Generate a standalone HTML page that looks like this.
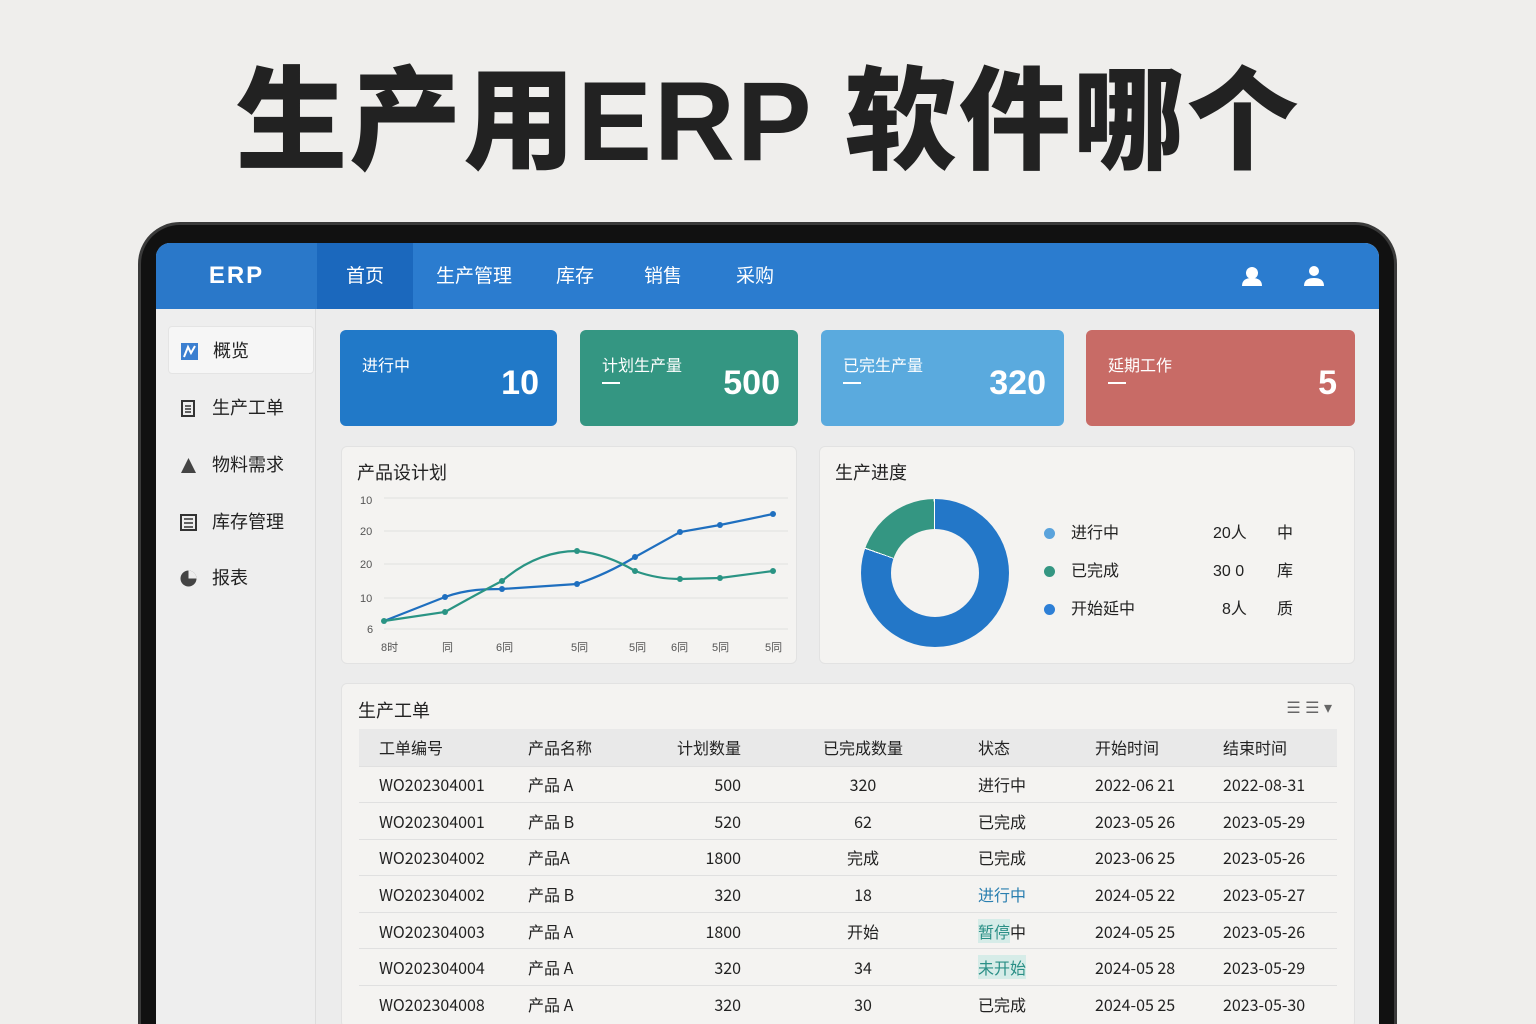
<!DOCTYPE html>
<html><head><meta charset="utf-8">
<style>
*{margin:0;padding:0;box-sizing:border-box}
html,body{width:1536px;height:1024px;overflow:hidden}
body{background:#efeeec;font-family:"Liberation Sans","Noto Sans CJK SC",sans-serif;color:#222}
.wrap{position:relative;width:1536px;height:1024px;overflow:hidden}
.title{position:absolute;left:0;width:1536px;top:52px;text-align:center;font-size:112px;font-weight:900;color:#222;letter-spacing:2px;line-height:140px}
.dev{position:absolute;left:138px;top:222px;width:1259px;height:802px;background:#111;border-radius:42px 42px 0 0;border:3px solid #3a3a3a;border-bottom:0}
.scr{position:absolute;left:156px;top:243px;width:1223px;height:781px;background:#ececec;border-radius:14px 14px 0 0;overflow:hidden}
.hdr{position:absolute;left:0;top:0;width:1223px;height:66px;background:#2b7ccf}
.logo{position:absolute;left:0;top:0;width:161px;height:66px;background:#2a78c9;color:#fff;font-size:24px;text-align:center;line-height:66px;font-weight:bold;letter-spacing:2px}
.tab{position:absolute;top:0;height:66px;line-height:68px;color:#fff;font-size:19px}
.act{background:#1b68bd;width:96px;text-align:center}
.side{position:absolute;left:0;top:66px;width:160px;height:715px;background:#eeeeee;border-right:1px solid #ddd}
.si{position:absolute;left:12px;width:146px;height:48px;line-height:48px;padding-left:44px;font-size:18px;color:#222}
.si .ic{position:absolute;left:12px;top:16px;width:17px;height:17px}
.card{position:absolute;top:87px;height:96px;border-radius:6px;color:#fff}
.card .l{position:absolute;left:22px;top:22px;font-size:16px}
.card .d{position:absolute;left:22px;top:52px;width:18px;height:2px;background:#fff}
.card .n{position:absolute;right:18px;top:34px;font-size:34px;font-weight:bold}
.pan{position:absolute;background:#f4f3f1;border:1px solid #e2e2e2;border-radius:6px}
.pt{position:absolute;left:15px;top:12px;font-size:18px}
table{position:absolute;left:17px;top:45px;width:978px;border-collapse:collapse;font-size:16px;font-family:"Noto Sans CJK SC","Liberation Sans",sans-serif;table-layout:fixed}
th{height:37px;background:#e9e9e9;font-weight:normal;text-align:left;font-size:16px;line-height:20px;vertical-align:middle}
td{height:36.6px;border-top:1px solid #e0e0e0;text-align:left;line-height:20px;vertical-align:middle}
.c1{padding-left:20px;width:169px}.c2{width:130px}.c3{width:101px;text-align:right;padding-right:18px}
.c4{width:208px;text-align:center}.c5{width:128px;padding-left:11px}.c6{width:128px}
.dot{display:inline-block;width:11px;height:11px;border-radius:50%;margin-right:16px;vertical-align:-1px}
.lg{position:relative;white-space:nowrap;height:38px}
</style></head><body><div class="wrap">
<div class="title">生产用ERP 软件哪个</div>
<div class="dev"></div>
<div class="scr">
 <div class="hdr">
  <div class="logo">ERP</div>
  <div class="tab act" style="left:161px">首页</div>
  <div class="tab" style="left:280px">生产管理</div>
  <div class="tab" style="left:400px">库存</div>
  <div class="tab" style="left:488px">销售</div>
  <div class="tab" style="left:580px">采购</div>
  <svg style="position:absolute;left:1085px;top:22px" width="22" height="22" viewBox="0 0 22 22"><circle cx="11" cy="8" r="6" fill="#fff"/><path d="M1 21c0-6 4-8 10-8s10 2 10 8z" fill="#fff"/></svg>
  <svg style="position:absolute;left:1147px;top:22px" width="22" height="22" viewBox="0 0 22 22"><circle cx="11" cy="6" r="5" fill="#fff"/><path d="M1 21c0-6 4-8 10-8s10 2 10 8z" fill="#fff"/></svg>
 </div>
 <div class="side">
  <div class="si" style="top:17px;background:#f6f6f6;border:1px solid #e4e4e4;border-radius:4px"><svg class="ic" viewBox="0 0 17 17"><rect x="0" y="0" width="17" height="17" fill="#3b7fd0"/><path d="M3 14l4-10 3 6 4-7" stroke="#fff" stroke-width="2" fill="none"/></svg>概览</div>
  <div class="si" style="top:75px"><svg class="ic" viewBox="0 0 17 17"><rect x="2" y="1" width="12" height="15" fill="none" stroke="#333" stroke-width="2"/><path d="M5 6h6M5 9h6M5 12h6" stroke="#333" stroke-width="1.5"/></svg>生产工单</div>
  <div class="si" style="top:132px"><svg class="ic" viewBox="0 0 17 17"><path d="M8.5 1L1 16h15z" fill="#444"/></svg>物料需求</div>
  <div class="si" style="top:189px"><svg class="ic" viewBox="0 0 17 17"><rect x="1" y="1" width="15" height="15" fill="none" stroke="#333" stroke-width="2"/><path d="M4 5h9M4 9h9M4 13h9" stroke="#333" stroke-width="1.5"/></svg>库存管理</div>
  <div class="si" style="top:245px"><svg class="ic" viewBox="0 0 17 17"><circle cx="8.5" cy="8.5" r="8" fill="#444"/><path d="M8.5 8.5V0.5A8 8 0 0 1 16.5 8.5z" fill="#eee"/></svg>报表</div>
 </div>
 <div class="card" style="left:184px;width:217px;background:#2179c8"><div class="l">进行中</div><div class="n">10</div></div>
 <div class="card" style="left:424px;width:218px;background:#349682"><div class="l">计划生产量</div><div class="d"></div><div class="n">500</div></div>
 <div class="card" style="left:665px;width:243px;background:#5aaade"><div class="l">已完生产量</div><div class="d"></div><div class="n">320</div></div>
 <div class="card" style="left:930px;width:269px;background:#c86b66"><div class="l">延期工作</div><div class="d"></div><div class="n">5</div></div>

 <div class="pan" style="left:185px;top:203px;width:456px;height:218px">
  <div class="pt">产品设计划</div>
  <svg style="position:absolute;left:0;top:0" width="456" height="218" viewBox="185 203 456 218" font-size="11" fill="#555">
   <g stroke="#e0e0e0"><line x1="227" y1="254" x2="631" y2="254"/><line x1="227" y1="287" x2="631" y2="287"/><line x1="227" y1="320" x2="631" y2="320"/><line x1="227" y1="354" x2="631" y2="354"/><line x1="227" y1="385" x2="631" y2="385"/></g>
   <text x="203" y="260">10</text><text x="203" y="291">20</text><text x="203" y="324">20</text><text x="203" y="358">10</text><text x="210" y="389">6</text>
   <text x="224" y="407">8时</text><text x="285" y="407">同</text><text x="339" y="407">6同</text><text x="414" y="407">5同</text><text x="472" y="407">5同</text><text x="514" y="407">6同</text><text x="555" y="407">5同</text><text x="608" y="407">5同</text>
   <path d="M227 377 L288 353 C310 345 330 345 345 345 L420 340 Q450 330 478 313 L523 288 L563 281 L616 270" stroke="#1f6fbf" stroke-width="2.2" fill="none"/>
   <path d="M227 377 L288 368 Q320 350 345 337 Q380 307 420 307 Q450 310 478 327 Q500 335 523 335 L563 334 L616 327" stroke="#2a9484" stroke-width="2.2" fill="none"/>
   <g fill="#1f6fbf"><circle cx="288" cy="353" r="3"/><circle cx="345" cy="345" r="3"/><circle cx="420" cy="340" r="3"/><circle cx="478" cy="313" r="3"/><circle cx="523" cy="288" r="3"/><circle cx="563" cy="281" r="3"/><circle cx="616" cy="270" r="3"/></g>
   <g fill="#2a9484"><circle cx="227" cy="377" r="3"/><circle cx="288" cy="368" r="3"/><circle cx="345" cy="337" r="3"/><circle cx="420" cy="307" r="3"/><circle cx="478" cy="327" r="3"/><circle cx="523" cy="335" r="3"/><circle cx="563" cy="334" r="3"/><circle cx="616" cy="327" r="3"/></g>
  </svg>
 </div>
 <div class="pan" style="left:663px;top:203px;width:536px;height:218px">
  <div class="pt">生产进度</div>
  <div style="position:absolute;left:41px;top:52px;width:148px;height:148px;border-radius:50%;background:conic-gradient(#2377c8 0 289deg,#fff 289deg 290deg,#349682 290deg 359deg,#fff 359deg)"></div>
  <div style="position:absolute;left:71px;top:82px;width:88px;height:88px;border-radius:50%;background:#f4f3f1"></div>
  <div style="position:absolute;left:224px;top:68px;width:300px;font-size:16px;line-height:38px">
   <div class="lg"><span class="dot" style="background:#5aa3dc"></span>进行中<span style="position:absolute;left:169px">20人</span><span style="position:absolute;left:233px">中</span></div>
   <div class="lg"><span class="dot" style="background:#349682"></span>已完成<span style="position:absolute;left:169px">30 0</span><span style="position:absolute;left:233px">库</span></div>
   <div class="lg"><span class="dot" style="background:#2d7fd6"></span>开始延中<span style="position:absolute;left:178px">8人</span><span style="position:absolute;left:233px">质</span></div>
  </div>
 </div>
 <div class="pan" style="left:185px;top:440px;width:1014px;height:345px">
  <div class="pt" style="top:13px;left:16px">生产工单</div>
  <div style="position:absolute;right:22px;top:14px;font-size:16px;color:#666">☰ ☰ ▾</div>
  <table>
   <tr><th class="c1">工单编号</th><th class="c2">产品名称</th><th class="c3" style="text-align:right">计划数量</th><th class="c4" style="text-align:center">已完成数量</th><th class="c5">状态</th><th class="c6">开始时间</th><th>结束时间</th></tr>
   <tr><td class="c1">WO202304001</td><td class="c2">产品 A</td><td class="c3">500</td><td class="c4">320</td><td class="c5">进行中</td><td class="c6">2022-06 21</td><td>2022-08-31</td></tr>
   <tr><td class="c1">WO202304001</td><td class="c2">产品 B</td><td class="c3">520</td><td class="c4">62</td><td class="c5">已完成</td><td class="c6">2023-05 26</td><td>2023-05-29</td></tr>
   <tr><td class="c1">WO202304002</td><td class="c2">产品A</td><td class="c3">1800</td><td class="c4">完成</td><td class="c5">已完成</td><td class="c6">2023-06 25</td><td>2023-05-26</td></tr>
   <tr><td class="c1">WO202304002</td><td class="c2">产品 B</td><td class="c3">320</td><td class="c4">18</td><td class="c5" style="color:#2a7fb0">进行中</td><td class="c6">2024-05 22</td><td>2023-05-27</td></tr>
   <tr><td class="c1">WO202304003</td><td class="c2">产品 A</td><td class="c3">1800</td><td class="c4">开始</td><td class="c5"><span style="background:#d6ece8;color:#2a8f86">暂停</span>中</td><td class="c6">2024-05 25</td><td>2023-05-26</td></tr>
   <tr><td class="c1">WO202304004</td><td class="c2">产品 A</td><td class="c3">320</td><td class="c4">34</td><td class="c5"><span style="background:#d6ece8;color:#2a8f86">未开始</span></td><td class="c6">2024-05 28</td><td>2023-05-29</td></tr>
   <tr><td class="c1">WO202304008</td><td class="c2">产品 A</td><td class="c3">320</td><td class="c4">30</td><td class="c5">已完成</td><td class="c6">2024-05 25</td><td>2023-05-30</td></tr>
  </table>
 </div>
</div>
</div></body></html>
